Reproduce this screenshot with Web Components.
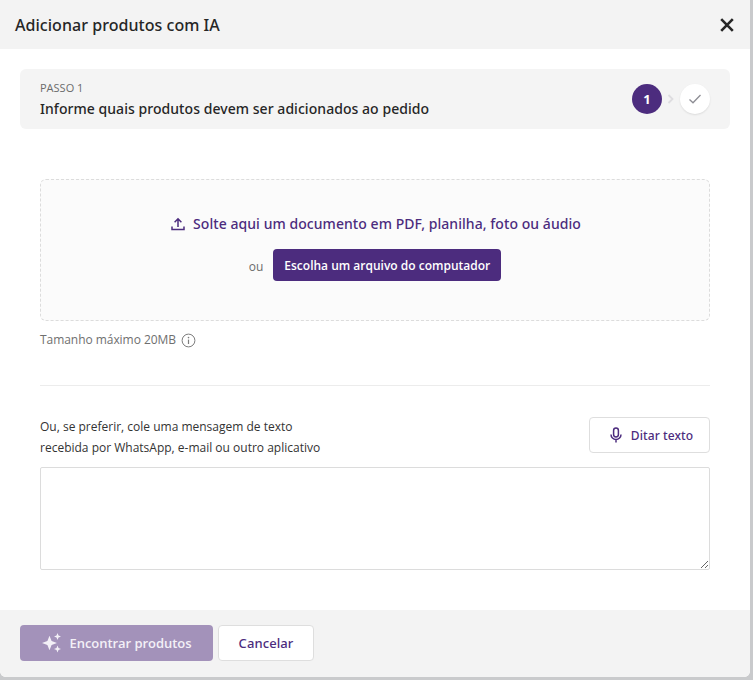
<!DOCTYPE html>
<html lang="pt-BR"><head><meta charset="utf-8"><title>Adicionar produtos com IA</title>
<style>
html,body{margin:0;padding:0;height:100%;background:#c9cacc;overflow:hidden}
body{font-family:"Open Sans","Noto Sans",sans-serif;color:#262626}
</style></head><body>
<template id="t-modal"><style>
:host{display:flex;flex-direction:column;width:750px;height:677px;background:#fff;border-radius:0 0 6px 6px;overflow:hidden}
header{flex:none;height:49px;box-sizing:border-box;background:#f3f3f3;display:flex;align-items:center;justify-content:space-between;padding:0 15px}
h1{margin:0;font:500 16px "Noto Sans",sans-serif;letter-spacing:.04px;color:#262626}
svg{display:block}
main{flex:1;min-height:0;padding:20px 20px 0;display:flex;flex-direction:column}
footer{flex:none;height:67px;box-sizing:border-box;background:#f3f3f3;display:flex;align-items:center;gap:5px;padding:0 20px 1px}
</style>
<header><h1><slot name="title"></slot></h1>
<svg width="16" height="16" viewBox="0 0 16 16"><path d="M2.2 2.2 13.8 13.8M13.8 2.2 2.2 13.8" stroke="#262626" stroke-width="2.6" fill="none"/></svg></header>
<main><slot></slot></main>
<footer><slot name="footer"></slot></footer></template>

<template id="t-step"><style>
:host{display:flex;align-items:center;justify-content:space-between;height:60px;box-sizing:border-box;padding:0 20px;background:#f4f4f4;border-radius:6px;flex:none}
.w{padding-top:4px}
.l{font-size:11px;line-height:14px;color:#6b6b6b;margin-top:-2px;margin-bottom:3px}
.t{font:500 14px/21px "Noto Sans",sans-serif;letter-spacing:.05px;color:#262626}
.s{display:flex;align-items:center;gap:0}
.c{width:30px;height:30px;border-radius:50%;display:flex;align-items:center;justify-content:center;box-sizing:border-box}
.a{background:#4c2c7e;color:#fff;font-size:13px;font-weight:700}
.b{background:#fff;box-shadow:0 1px 2px rgba(0,0,0,.1)}
svg{display:block}
</style>
<div class="w"><div class="l"><slot name="label"></slot></div><div class="t"><slot name="text"></slot></div></div>
<div class="s"><div class="c a">1</div>
<svg width="18" height="12" viewBox="0 0 18 12"><path d="M6.5 2 10.5 6 6.5 10" stroke="#dedde0" stroke-width="1.8" fill="none"/></svg>
<div class="c b"><svg width="14" height="12" viewBox="0 0 14 12"><path d="M1.5 6.5 5 9.8 12.5 2" stroke="#8d8d94" stroke-width="1.3" fill="none"/></svg></div></div></template>

<template id="t-drop"><style>
:host{display:flex;flex-direction:column;align-items:center;flex:none;margin-top:50px;height:142px;box-sizing:border-box;background:#fbfbfb;border:1px dashed #dcdcdc;border-radius:6px;padding-top:33px}
.m{display:flex;align-items:center;gap:8px;margin-left:2px;font:500 14px/21px "Noto Sans",sans-serif;letter-spacing:.055px;color:#4c2c7e}
.r{display:flex;align-items:center;gap:10px;margin-top:15px}
.o{font-size:12px;color:#6b6b6b;margin-top:3px}
svg{display:block}
</style>
<div class="m"><svg width="14" height="14" viewBox="0 0 14 14"><path d="M7 10V2M3.6 5.2 7 1.8l3.4 3.4M1 9.5v3h12v-3" stroke="#4c2c7e" stroke-width="1.5" fill="none"/></svg><span><slot name="msg"></slot></span></div>
<div class="r"><span class="o"><slot name="or"></slot></span><slot name="btn"></slot></div></template>

<template id="t-btn"><style>
:host{display:inline-flex;align-items:center;justify-content:center;box-sizing:border-box;border-radius:4px;font-size:12px;font-weight:600;white-space:nowrap;gap:8px;flex:none}
:host([kind=primary]){background:#4c2c7e;color:#fff;border:0}
:host([kind=outline]){background:#fff;color:#4c2c7e;border:1px solid #dedede;font-family:"Noto Sans",sans-serif;font-weight:500;letter-spacing:.1px}
:host([kind=muted]){background:#a392ba;color:#f3f0f7;border:0;font-weight:600}
::slotted(svg){display:block}
</style><slot name="icon"></slot><span><slot></slot></span></template>

<template id="t-hint"><style>
:host{display:flex;align-items:center;gap:5px;font-size:12px;line-height:16px;letter-spacing:-.05px;color:#6f6f6f;margin-top:11px;height:16px;flex:none}
svg{display:block}
</style><span><slot></slot></span>
<svg width="15" height="15" viewBox="0 0 15 15"><circle cx="7.5" cy="7.5" r="6.4" stroke="#7d7d7d" fill="none"/><path d="M7.5 6.6v4.4" stroke="#7d7d7d" stroke-width="1.2"/><circle cx="7.5" cy="4.6" r=".8" fill="#7d7d7d"/></svg></template>

<template id="t-paste"><style>
:host{display:flex;flex-direction:column;flex:none}
.d{height:1px;background:#ececec;margin-top:37px}
.r{display:flex;justify-content:space-between;align-items:flex-start;margin-top:31px}
.x{font-size:12px;line-height:21px;color:#333;margin-top:-1px}
textarea{display:block;box-sizing:border-box;width:670px;height:103px;margin-top:9px;border:1px solid #dcdcdc;border-radius:2px;background:#fff;padding:6px;font:12px "Open Sans",sans-serif;outline:0}
</style>
<div class="d"></div>
<div class="r"><div class="x"><slot name="text"></slot></div><slot name="btn"></slot></div>
<textarea aria-label="Mensagem de texto"></textarea></template>

<script>
for (const [tag,id] of [["ai-modal","t-modal"],["step-bar","t-step"],["drop-zone","t-drop"],["ui-btn","t-btn"],["size-hint","t-hint"],["paste-area","t-paste"]]) {
  customElements.define(tag, class extends HTMLElement {
    constructor(){super();this.attachShadow({mode:"open"}).appendChild(document.getElementById(id).content.cloneNode(true));}
  });
}
</script>

<ai-modal>
  <span slot="title">Adicionar produtos com IA</span>
  <div style="display:flex;flex-direction:column">
    <step-bar><span slot="label">PASSO 1</span><span slot="text">Informe quais produtos devem ser adicionados ao pedido</span></step-bar>
    <div style="padding:0 20px;display:flex;flex-direction:column">
      <drop-zone>
        <span slot="msg">Solte aqui um documento em PDF, planilha, foto ou áudio</span>
        <span slot="or">ou</span>
        <ui-btn slot="btn" kind="primary" style="width:228px;height:32px">Escolha um arquivo do computador</ui-btn>
      </drop-zone>
      <size-hint>Tamanho máximo 20MB</size-hint>
      <paste-area>
        <span slot="text">Ou, se preferir, cole uma mensagem de texto<br>recebida por WhatsApp, e-mail ou outro aplicativo</span>
        <ui-btn slot="btn" kind="outline" style="width:121px;height:36px;padding-left:3px">
          <svg slot="icon" width="14" height="16" viewBox="0 0 14 16"><rect x="4.6" y="1" width="4.8" height="9" rx="2.4" fill="none" stroke="#4c2c7e" stroke-width="1.5"/><path d="M2 7.5a5 5 0 0 0 10 0M7 12.5v3" fill="none" stroke="#4c2c7e" stroke-width="1.5"/></svg>
          Ditar texto</ui-btn>
      </paste-area>
    </div>
  </div>
  <ui-btn slot="footer" kind="muted" style="width:193px;height:36px;font-size:13px;letter-spacing:-.05px">
    <svg slot="icon" width="20" height="20" viewBox="0 0 20 20" fill="#f3f0f7"><path d="M7.5 2.8 9.6 8 15 10 9.6 12 7.5 17.2 5.4 12 0 10 5.4 8Z"/><path d="M15.5 0 16.5 2.6 19 3.5 16.5 4.4 15.5 7 14.5 4.4 12 3.5 14.5 2.6Z"/><path d="M15.5 12.5 16.5 15 19 16 16.5 17 15.5 19.5 14.5 17 12 16 14.5 15Z"/></svg>
    Encontrar produtos</ui-btn>
  <ui-btn slot="footer" kind="outline" style="width:96px;height:36px;font-size:13px">Cancelar</ui-btn>
</ai-modal>
</body></html>
